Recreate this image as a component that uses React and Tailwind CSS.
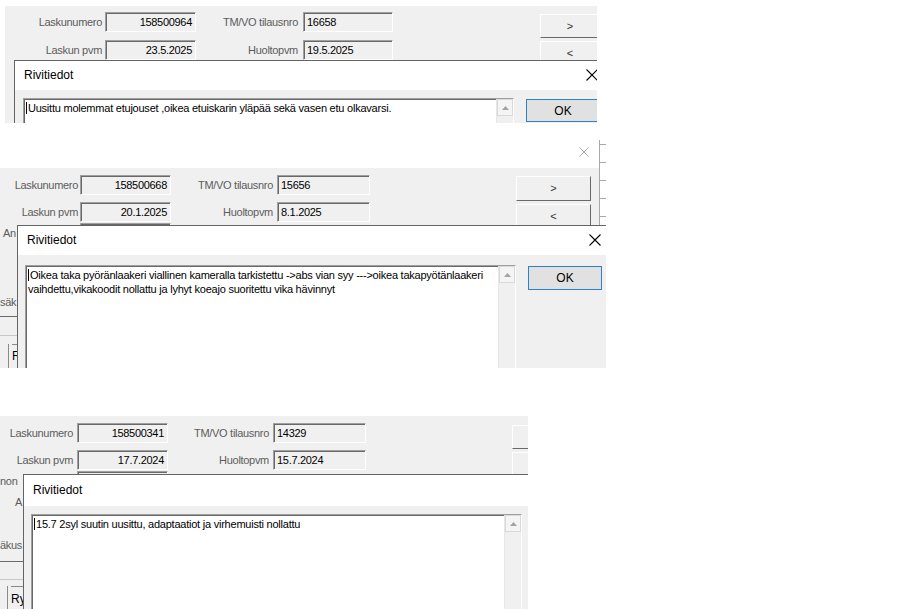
import React from 'react'

const FONT = "font-['Liberation_Sans',Arial,sans-serif]"

function Field({ className, value, right }) {
  return (
    <div
      className={`h-[20px] shrink-0 bg-[#f0f0f0] border border-t-[#a0a0a0] border-l-[#a0a0a0] border-r-white border-b-white shadow-[inset_1px_1px_0_#696969] flex items-center px-[3px] text-[11px] tracking-[-0.3px] text-black whitespace-nowrap overflow-hidden ${right ? 'justify-end' : ''} ${className}`}
    >
      {value}
    </div>
  )
}

function Label({ className, children }) {
  return (
    <div className={`shrink-0 text-[11px] tracking-[-0.3px] text-[#5c5c5c] whitespace-nowrap overflow-hidden ${className}`}>
      {children}
    </div>
  )
}

function NavButton({ className, children }) {
  return (
    <div
      className={`shrink-0 bg-[#f0f0f0] border border-t-white border-l-white border-r-[#696969] border-b-[#696969] flex items-center justify-center text-[11px] text-[#333] ${className}`}
    >
      {children}
    </div>
  )
}

function CloseX({ size, color, width }) {
  return (
    <svg width={size} height={size} viewBox="0 0 12 12">
      <path d="M0.5 0.5 L11.5 11.5 M11.5 0.5 L0.5 11.5" stroke={color} strokeWidth={width} fill="none" />
    </svg>
  )
}

function ScrollBar() {
  return (
    <div className="w-[17px] shrink-0 h-full bg-[#f0f0f0] border-l border-[#e6e6e6] flex flex-col">
      <div className="h-[17px] border border-[#d9d9d9] bg-[#f4f4f4] flex items-center justify-center">
        <svg width="7" height="4" viewBox="0 0 7 4">
          <polygon points="3.5,0 7,4 0,4" fill="#a3a3a3" />
        </svg>
      </div>
    </div>
  )
}

function OkButton({ className }) {
  return (
    <div
      className={`shrink-0 bg-[#e1e1e1] border border-[#3c7fb1] shadow-[inset_0_0_0_1px_#cfe3f5] flex items-center justify-center text-[12px] text-black ${className}`}
    >
      OK
    </div>
  )
}

function Dialog({ pos, titleH, bodyPad, boxH, okClass, lines }) {
  return (
    <div className={`absolute bg-[#f0f0f0] border-l border-t border-[#646464] ${pos}`}>
      {/* title bar */}
      <div className={`bg-white flex items-center justify-between ${titleH}`}>
        <div className="text-[12px] text-black pl-[9px] -mt-[2px]">Rivitiedot</div>
        <div className="pr-[8px] -mt-[2px]">
          <CloseX size={12} color="#000" width={1.1} />
        </div>
      </div>
      {/* body */}
      <div className={`flex items-start ${bodyPad}`}>
        <div
          className={`w-[491px] shrink-0 bg-white border border-t-[#a0a0a0] border-l-[#a0a0a0] border-r-white border-b-white shadow-[inset_1px_1px_0_#696969] flex ${boxH}`}
        >
          <div className="flex-1 pl-[2px] pt-[2px] text-[11px] leading-[14px] tracking-[-0.23px] text-black">
            {lines.map((line, i) => (
              <div key={i} className="whitespace-nowrap">
                {i === 0 && <span className="inline-block w-px h-[12px] bg-black align-[-2px] mr-[1px]"></span>}
                {line}
              </div>
            ))}
          </div>
          <ScrollBar />
        </div>
        {okClass && <OkButton className={okClass} />}
      </div>
    </div>
  )
}

function App() {
  return (
    <div className={`w-[904px] h-[609px] bg-white overflow-hidden flex flex-col ${FONT}`}>

      {/* PANEL 1 */}

      <div className="relative ml-[5px] mt-[6px] w-[592px] h-[117px] bg-[#f0f0f0] overflow-hidden shrink-0">
        <div className="flex pt-[6px]">
          <div className="flex flex-col gap-[8px]">
            <div className="flex items-center">
              <Label className="w-[100px] text-right pr-[3px]">Laskunumero</Label>
              <Field className="w-[91px]" value="158500964" right />
              <Label className="w-[107px] text-right pr-[5px]">TM/VO tilausnro</Label>
              <Field className="w-[90px]" value="16658" />
            </div>
            <div className="flex items-center">
              <Label className="w-[100px] text-right pr-[3px]">Laskun pvm</Label>
              <Field className="w-[91px]" value="23.5.2025" right />
              <Label className="w-[107px] text-right pr-[5px]">Huoltopvm</Label>
              <Field className="w-[90px]" value="19.5.2025" />
            </div>
          </div>
          <div className="ml-[147px] pt-[2px] flex flex-col gap-[3px]">
            <NavButton className="w-[60px] h-[24px]">&gt;</NavButton>
            <NavButton className="w-[60px] h-[24px]">&lt;</NavButton>
          </div>
        </div>

        <Dialog
          pos="left-[9px] top-[54px] w-[592px] h-[80px]"
          titleH="h-[29px]"
          bodyPad="pl-[8px] pt-[8px]"
          boxH="h-[40px]"
          okClass="ml-[12px] mt-[1px] w-[74px] h-[23px]"
          lines={['Uusittu molemmat etujouset ,oikea etuiskarin yläpää sekä vasen etu olkavarsi.']}
        />
      </div>

      {/* PANEL 2 */}

      <div className="relative mt-[17px] w-[606px] h-[228px] overflow-hidden shrink-0">
        <div className="flex">
          <div className="w-[599px] flex flex-col">
            <div className="h-[28px] bg-white flex justify-end items-start pt-[7px] pr-[10px]">
              <CloseX size={10} color="#9a9a9a" width={1} />
            </div>
            <div className="h-[200px] bg-[#f0f0f0] flex flex-col">
              <div className="flex pt-[7px]">
                <div className="flex flex-col">
                  <div className="flex items-center">
                    <Label className="w-[80px] text-right pr-[2px]">Laskunumero</Label>
                    <Field className="w-[91px]" value="158500668" right />
                    <Label className="w-[106px] text-right pr-[4px]">TM/VO tilausnro</Label>
                    <Field className="w-[93px]" value="15656" />
                  </div>
                  <div className="flex items-center mt-[7px]">
                    <Label className="w-[80px] text-right pr-[2px]">Laskun pvm</Label>
                    <Field className="w-[91px]" value="20.1.2025" right />
                    <Label className="w-[106px] text-right pr-[4px]">Huoltopvm</Label>
                    <Field className="w-[93px]" value="8.1.2025" />
                  </div>
                  <div className="flex items-center mt-[1px]">
                    <Label className="w-[17px] pl-[3px] mr-[63px]">An</Label>
                    <Field className="w-[91px]" value="" />
                  </div>
                </div>
                <div className="ml-[146px] pt-[1px] flex flex-col gap-[3px]">
                  <NavButton className="w-[75px] h-[25px]">&gt;</NavButton>
                  <NavButton className="w-[75px] h-[25px]">&lt;</NavButton>
                </div>
              </div>
              <Label className="mt-[53px] w-[17px] leading-[13px]">säk</Label>
              <div className="mt-[7px] h-px bg-[#6a6a6a]"></div>
              <div className="mt-[18px] h-px bg-[#c8c8c8]"></div>
              <div className="ml-[8px] mt-[8px] flex-1 border-l border-[#8a8a8a] pl-[3px] text-[12px] text-black">
                <div className="border-t border-[#8a8a8a] pt-[2px] w-[9px] overflow-hidden">R</div>
              </div>
            </div>
          </div>
          <div className="w-[7px] h-[85px] flex flex-col pt-[4px] border-l border-[#a9a9a9]">
            <div className="w-[6px] h-px bg-[#a9a9a9]"></div>
            <div className="w-[6px] h-px bg-[#a9a9a9] mt-[17px]"></div>
            <div className="w-[6px] h-px bg-[#a9a9a9] mt-[17px]"></div>
            <div className="w-[6px] h-px bg-[#a9a9a9] mt-[17px]"></div>
            <div className="w-[6px] h-px bg-[#a9a9a9] mt-[17px]"></div>
          </div>
        </div>

        <Dialog
          pos="left-[17px] top-[85px] w-[592px] h-[150px]"
          titleH="h-[29px]"
          bodyPad="pl-[7px] pt-[10px]"
          boxH="h-[120px]"
          okClass="ml-[12px] mt-[1px] w-[74px] h-[24px]"
          lines={[
            'Oikea taka pyöränlaakeri viallinen kameralla tarkistettu ->abs vian syy --->oikea takapyötänlaakeri',
            'vaihdettu,vikakoodit nollattu ja lyhyt koeajo suoritettu vika hävinnyt',
          ]}
        />
      </div>

      {/* PANEL 3 */}

      <div className="relative mt-[48px] w-[528px] h-[193px] bg-[#f0f0f0] overflow-hidden shrink-0">
        <div className="flex flex-col">
          <div className="flex pt-[7px]">
            <div className="flex flex-col">
              <div className="flex items-center">
                <Label className="w-[77px] text-right pr-[4px]">Laskunumero</Label>
                <Field className="w-[91px]" value="158500341" right />
                <Label className="w-[105px] text-right pr-[4px]">TM/VO tilausnro</Label>
                <Field className="w-[93px]" value="14329" />
              </div>
              <div className="flex items-center mt-[7px]">
                <Label className="w-[77px] text-right pr-[4px]">Laskun pvm</Label>
                <Field className="w-[91px]" value="17.7.2024" right />
                <Label className="w-[105px] text-right pr-[4px]">Huoltopvm</Label>
                <Field className="w-[93px]" value="15.7.2024" />
              </div>
              <div className="flex items-center mt-[1px]">
                <Label className="w-[23px] mr-[54px]">non</Label>
                <Field className="w-[91px]" value="" />
              </div>
              <div className="flex items-center mt-[3px]">
                <Label className="w-[23px] pl-[15px]">A</Label>
              </div>
            </div>
            <div className="ml-[146px] pt-[2px] flex flex-col gap-[3px]">
              <NavButton className="w-[60px] h-[24px]"></NavButton>
              <NavButton className="w-[60px] h-[24px]"></NavButton>
            </div>
          </div>
          <Label className="mt-[28px] w-[23px] leading-[13px]">äkus</Label>
          <div className="mt-[9px] h-px bg-[#6a6a6a]"></div>
          <div className="mt-[17px] h-px bg-[#c8c8c8]"></div>
          <div className="ml-[7px] mt-[6px] h-[30px] border-l border-[#8a8a8a] pl-[3px] text-[12px] text-black">
            <div className="border-t border-[#8a8a8a] pt-[3px] w-[15px] overflow-hidden">Ry</div>
          </div>
        </div>

        <Dialog
          pos="left-[23px] top-[58px] w-[600px] h-[150px]"
          titleH="h-[31px]"
          bodyPad="pl-[7px] pt-[8px]"
          boxH="h-[120px]"
          okClass=""
          lines={['15.7 2syl suutin uusittu, adaptaatiot ja virhemuisti nollattu']}
        />
      </div>

    </div>
  )
}

export default App
